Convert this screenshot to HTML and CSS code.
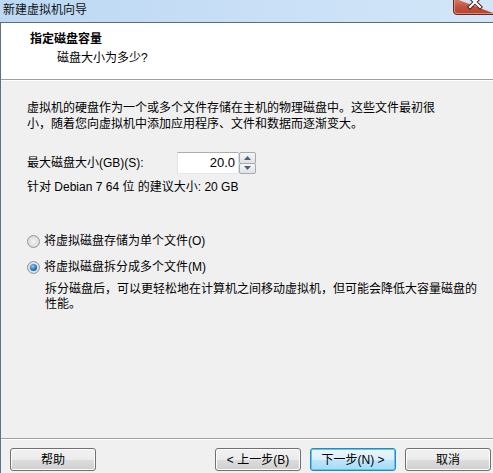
FILE: index.html
```html
<!DOCTYPE html>
<html lang="zh-CN">
<head>
<meta charset="utf-8">
<title>新建虚拟机向导</title>
<link rel="stylesheet" href="styles.css">
</head>
<body>
<div class="dialog">
  <div class="titlebar">
    <span class="title">新建虚拟机向导</span>
    <span class="close" aria-label="关闭">
      <svg width="43" height="15" viewBox="0 0 43 15">
        <defs>
          <linearGradient id="cg" x1="0" y1="0" x2="0" y2="1">
            <stop offset="0" stop-color="#d9826f"/>
            <stop offset="0.5" stop-color="#c5533f"/>
            <stop offset="1" stop-color="#b9402c"/>
          </linearGradient>
        </defs>
        <path d="M0.5 -2 V11 Q0.5 14.5 4 14.5 H44" fill="url(#cg)" stroke="#5b2a22" stroke-width="1"/>
        <path d="M1.5 -2 V11 Q1.5 13.5 4 13.5 H44" fill="none" stroke="#e9a99a" stroke-width="1" opacity="0.7"/>
        <g stroke-linecap="square">
          <path d="M17 -3 L27 7 M27 -3 L17 7" stroke="#4a2520" stroke-width="4.2"/>
          <path d="M17 -3 L27 7 M27 -3 L17 7" stroke="#ffffff" stroke-width="2.2"/>
        </g>
      </svg>
    </span>
  </div>
  <div class="frame">
    <div class="header">
      <div class="h-title">指定磁盘容量</div>
      <div class="h-sub">磁盘大小为多少?</div>
    </div>
    <div class="content">
      <p class="intro">虚拟机的硬盘作为一个或多个文件存储在主机的物理磁盘中。这些文件最初很<br>小，随着您向虚拟机中添加应用程序、文件和数据而逐渐变大。</p>
      <div class="size-row">
        <label class="size-label" for="size">最大磁盘大小(GB)(S):</label>
        <div class="spin">
          <div class="spin-input" id="size">20.0</div>
          <div class="spin-btns">
            <span class="spin-btn"><svg width="7" height="4" viewBox="0 0 7 4"><path d="M0 4 L3.5 0 L7 4Z" fill="#4c607f"/></svg></span>
            <span class="spin-btn"><svg width="7" height="4" viewBox="0 0 7 4"><path d="M0 0 L3.5 4 L7 0Z" fill="#4c607f"/></svg></span>
          </div>
        </div>
      </div>
      <p class="recommend">针对 Debian 7 64 位 的建议大小: 20 GB</p>
      <div class="options">
        <div class="radio-row"><span class="radio"></span><span>将虚拟磁盘存储为单个文件(O)</span></div>
        <div class="radio-row second"><span class="radio checked"></span><span>将虚拟磁盘拆分成多个文件(M)</span></div>
        <p class="desc">拆分磁盘后，可以更轻松地在计算机之间移动虚拟机，但可能会降低大容量磁盘的<br>性能。</p>
      </div>
    </div>
    <div class="footer">
      <div class="footer-inner">
        <button class="btn">帮助</button>
        <span class="spacer"></span>
        <button class="btn">&lt; 上一步(B)</button>
        <button class="btn default">下一步(N) &gt;</button>
        <button class="btn">取消</button>
      </div>
    </div>
  </div>
</div>
</body>
</html>
```
FILE: styles.css
```css
* { box-sizing: border-box; }

html, body {
  margin: 0;
  padding: 0;
  width: 493px;
  height: 473px;
  overflow: hidden;
}

body {
  font-family: "Liberation Sans", "Noto Sans CJK SC", sans-serif;
  font-size: 12px;
  color: #000;
  background: #f0f0f0;
}

.dialog {
  display: flex;
  flex-direction: column;
  height: 473px;
}

.titlebar {
  height: 22px;
  flex: none;
  display: flex;
  justify-content: space-between;
  align-items: flex-start;
  background: linear-gradient(to right, #bcd8f3 0%, #c8dff6 50%, #d3e6f9 100%);
  overflow: hidden;
}

.title {
  line-height: 20px;
  padding-left: 3px;
  color: #111;
}

.close {
  display: block;
  width: 40px;
  height: 15px;
  overflow: hidden;
}
.close svg { display: block; }

.frame {
  flex: 1;
  display: flex;
  flex-direction: column;
  border-top: 1px solid #5f6d7a;
  border-left: 1px solid #61707f;
}

.header {
  height: 57px;
  flex: none;
  background: #fff;
  border-bottom: 1px solid #a0a0a0;
  padding: 8px 0 0 29px;
}

.h-title {
  font-weight: bold;
  line-height: 16px;
}

.h-sub {
  line-height: 16px;
  margin-top: 3px;
  padding-left: 27px;
}

.content {
  flex: 1;
  border-top: 1px solid #ffffff;
  padding: 0 0 0 26px;
}

.intro {
  margin: 19px 0 0;
  line-height: 16px;
}

.size-row {
  display: flex;
  align-items: center;
  margin-top: 20px;
  height: 22px;
}

.size-label {
  width: 150px;
  line-height: 16px;
}

.spin {
  display: flex;
  height: 22px;
}

.spin-input {
  width: 62px;
  height: 22px;
  background: #fff;
  border: 1px solid #abadb3;
  border-left-color: #e2e3ea;
  border-bottom-color: #e3e9ef;
  border-right-color: #dbdfe6;
  text-align: right;
  padding-right: 3px;
  line-height: 20px;
  font-size: 13px;
}

.spin-btns {
  display: flex;
  flex-direction: column;
  width: 17px;
  height: 22px;
}

.spin-btn {
  flex: 1;
  display: flex;
  align-items: center;
  justify-content: center;
  border: 1px solid #a5a9b0;
  border-radius: 2px;
  background: linear-gradient(#f6f6f6, #e2e2e2);
}
.spin-btn + .spin-btn { margin-top: -1px; }
.spin-btn svg { display: block; }

.recommend {
  margin: 6px 0 0;
  line-height: 14px;
}

.options {
  margin-top: 39px;
}

.radio-row {
  display: flex;
  align-items: center;
  height: 16px;
  line-height: 16px;
}

.radio-row.second {
  margin-top: 10px;
}

.radio {
  width: 13px;
  height: 13px;
  border-radius: 50%;
  border: 1px solid #969696;
  background: radial-gradient(circle at 50% 50%, #f4f4f4 0, #dedede 60%, #cfcfcf 100%);
  margin-right: 4px;
  flex: none;
  display: flex;
  align-items: center;
  justify-content: center;
}

.radio.checked::after {
  content: "";
  width: 7px;
  height: 7px;
  border-radius: 50%;
  background: radial-gradient(circle at 40% 35%, #8fd2ff 0, #2a85d0 45%, #0c3d78 100%);
}

.desc {
  margin: 7px 0 0 18px;
  line-height: 15px;
}

.footer {
  flex: none;
  height: 35px;
  border-top: 1px solid #a0a0a0;
}

.footer-inner {
  height: 34px;
  border-top: 1px solid #ffffff;
  display: flex;
  align-items: flex-start;
  gap: 9px;
  padding: 8px 2px 0 9px;
}

.spacer { flex: 1; }

.btn {
  width: 86px;
  height: 23px;
  padding: 0;
  font-family: inherit;
  font-size: 12px;
  color: #000;
  border: 1px solid #707070;
  border-radius: 3px;
  background: linear-gradient(#f2f2f2 0%, #ebebeb 50%, #dddddd 50%, #cfcfcf 100%);
  box-shadow: inset 0 0 0 1px #fcfcfc;
  line-height: 20px;
}

.btn.default {
  border-color: #3c7fb1;
  background: linear-gradient(#eaf6fd 0%, #d9f0fc 50%, #bee6fd 50%, #a7d9f5 100%);
  box-shadow: inset 0 0 0 1px #48d0fb;
}
```
